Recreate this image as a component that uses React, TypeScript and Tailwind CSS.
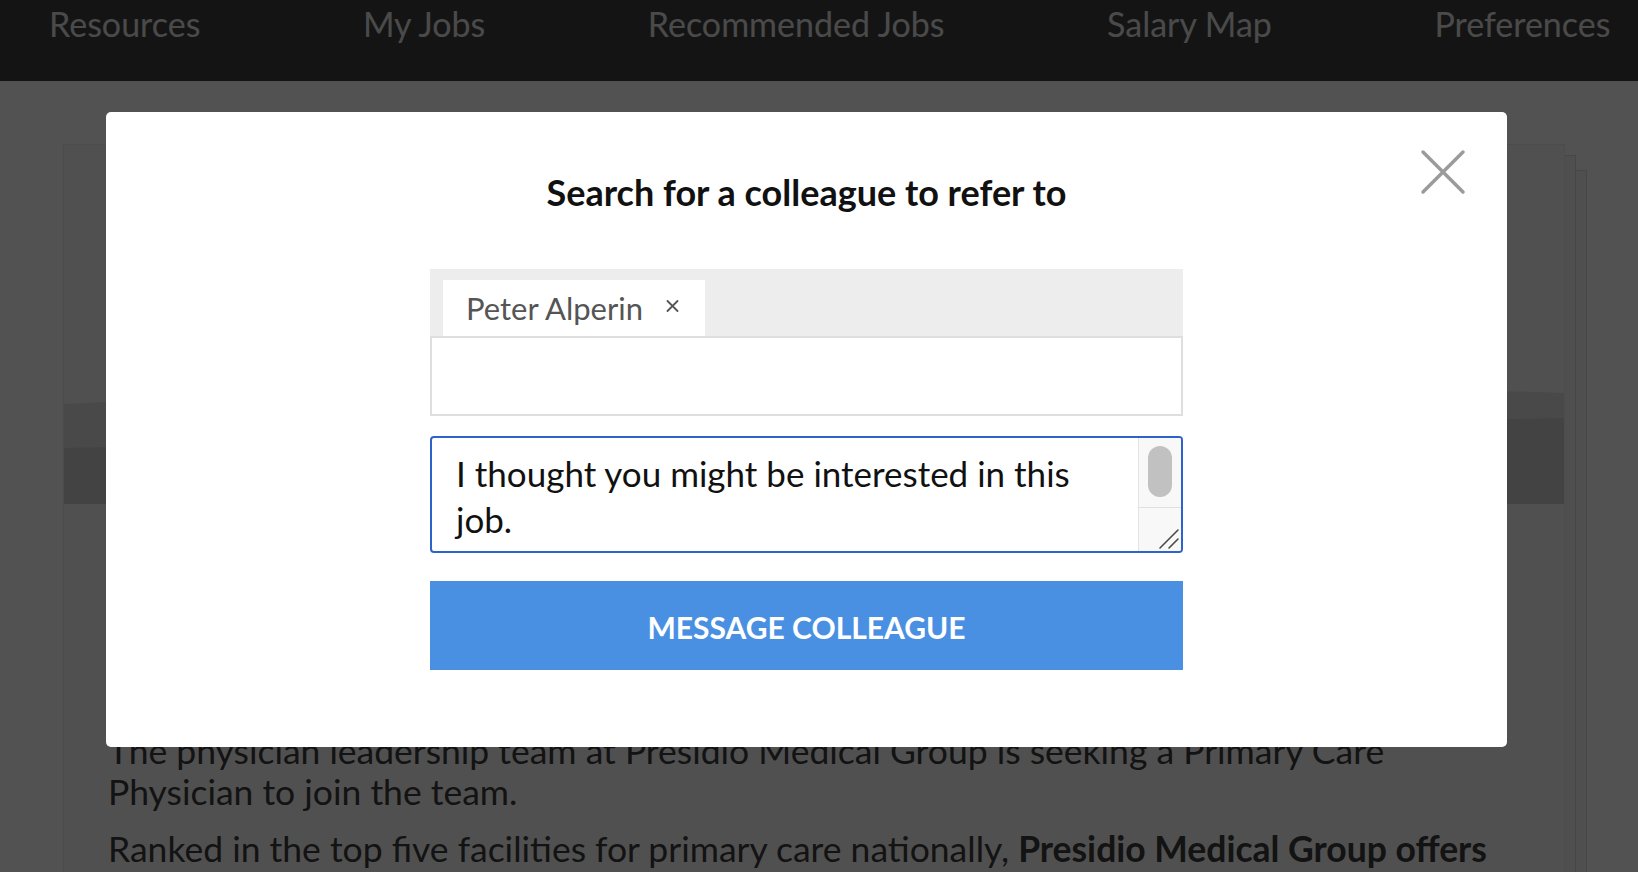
import React from "react";

const NAV_ITEMS = ["Resources", "My Jobs", "Recommended Jobs", "Salary Map", "Preferences"];

function CloseIcon() {
  return (
    <svg width="46" height="46" viewBox="0 0 46 46" fill="none">
      <path d="M3 3 L43 43 M43 3 L3 43" stroke="#9b9b9b" strokeWidth="3.5" strokeLinecap="round" />
    </svg>
  );
}

function ChipRemoveIcon() {
  return (
    <svg width="13" height="12" viewBox="0 0 13 12" fill="none">
      <path d="M1.5 1 L11.5 11 M11.5 1 L1.5 11" stroke="#555" strokeWidth="1.8" strokeLinecap="round" />
    </svg>
  );
}

function ResizeGrip() {
  return (
    <svg width="24" height="24" viewBox="0 0 24 24" fill="none">
      <path d="M21 3 L3 21 M21 12 L12 21" stroke="#4a4a4a" strokeWidth="1.6" strokeLinecap="round" />
    </svg>
  );
}

export default function App() {
  return (
    <div className="relative h-[872px] w-[1638px] overflow-hidden bg-white font-['Lato','Noto_Sans',sans-serif]">
      {/* top navigation */}
      <nav className="flex h-[81px] gap-[162.5px] bg-[#3f3f3f] pl-[49px] pt-[4px] text-[34px] leading-[40px] text-[#e6e6e6]">
        {NAV_ITEMS.map((item) => (
          <a key={item} className="whitespace-nowrap">
            {item}
          </a>
        ))}
      </nav>

      {/* job detail page */}
      <main className="pl-[63px] pt-[63px]">
        <div className="relative w-[1502px]">
          <div className="absolute left-[22px] right-[-22px] top-[26px] h-[900px] border border-[#dcdcdc] bg-[#f5f5f5]" />
          <div className="absolute left-[11px] right-[-11px] top-[11px] h-[900px] border border-[#dcdcdc] bg-[#f6f6f6]" />
          <article className="relative h-[900px] border border-[#ebebeb] bg-[#f7f7f7]">
            <div className="h-[236px]" />
            <svg width="1500" height="123" viewBox="0 0 1500 123" preserveAspectRatio="none" className="block">
              <path d="M0 23 Q 760 -12 1500 12 L1500 123 L0 123 Z" fill="#e2e2e2" />
              <path d="M0 67 Q 700 52 1500 37 L1500 123 L0 123 Z" fill="#cfcfcf" />
            </svg>
            <div className="pl-[44px] pr-[40px] pt-[226px] text-[35.5px] leading-[41px] text-[#3c3c3c]">
              <p>
                The physician leadership team at Presidio Medical Group is seeking a Primary Care Physician to join the
                team.
              </p>
              <p className="mt-[16px]">
                Ranked in the top five facilities for primary care nationally,{" "}
                <b className="font-bold">Presidio Medical Group offers</b> outstanding support to every physician.
              </p>
            </div>
          </article>
        </div>
      </main>

      {/* dialog backdrop */}
      <div className="absolute inset-0 bg-black/[0.68]" />

      {/* referral dialog */}
      <div className="absolute left-[106px] top-[112px] h-[635px] w-[1401px] rounded-[5px] bg-white">
        <button className="absolute right-[41px] top-[37px] h-[46px] w-[46px]">
          <CloseIcon />
        </button>
        <div className="flex flex-col items-center pt-[60px]">
          <h2 className="text-[36px] font-bold leading-[40px] text-[#111]">Search for a colleague to refer to</h2>

          <div className="mt-[57px] w-[753px]">
            {/* selected colleagues */}
            <div className="h-[67px] bg-[#ededed] pl-[13px] pt-[11px]">
              <span className="flex h-[56px] w-[262px] bg-white pl-[23px] pt-[1px] text-[31px] leading-[55px] text-[#555]">
                Peter Alperin
                <span className="ml-[23px] mt-[19px] self-start">
                  <ChipRemoveIcon />
                </span>
              </span>
            </div>
            <div className="h-[80px] border-2 border-[#dedede] bg-white" />

            {/* message box */}
            <div className="mt-[20px] flex h-[117px] overflow-hidden rounded-[4px] border-2 border-[#2f63cc]">
              <div className="flex-1 pl-[24px] pr-[40px] pt-[12px] text-[35px] leading-[46px] text-[#111]">
                I thought you might be interested in this job.
              </div>
              <div className="flex w-[43px] flex-col border-l border-[#e3e3e3] bg-[#f8f8f8]">
                <div className="flex h-[69px] justify-center pt-[8px]">
                  <div className="h-[51px] w-[24px] rounded-full bg-[#c1c1c1]" />
                </div>
                <div className="flex flex-1 items-end justify-end border-t border-[#e0e0e0]">
                  <ResizeGrip />
                </div>
              </div>
            </div>

            <button className="mt-[28px] flex h-[89px] w-full items-center justify-center bg-[#4a90e2] pt-[4px] text-[30px] font-bold text-white">
              MESSAGE COLLEAGUE
            </button>
          </div>
        </div>
      </div>
    </div>
  );
}
